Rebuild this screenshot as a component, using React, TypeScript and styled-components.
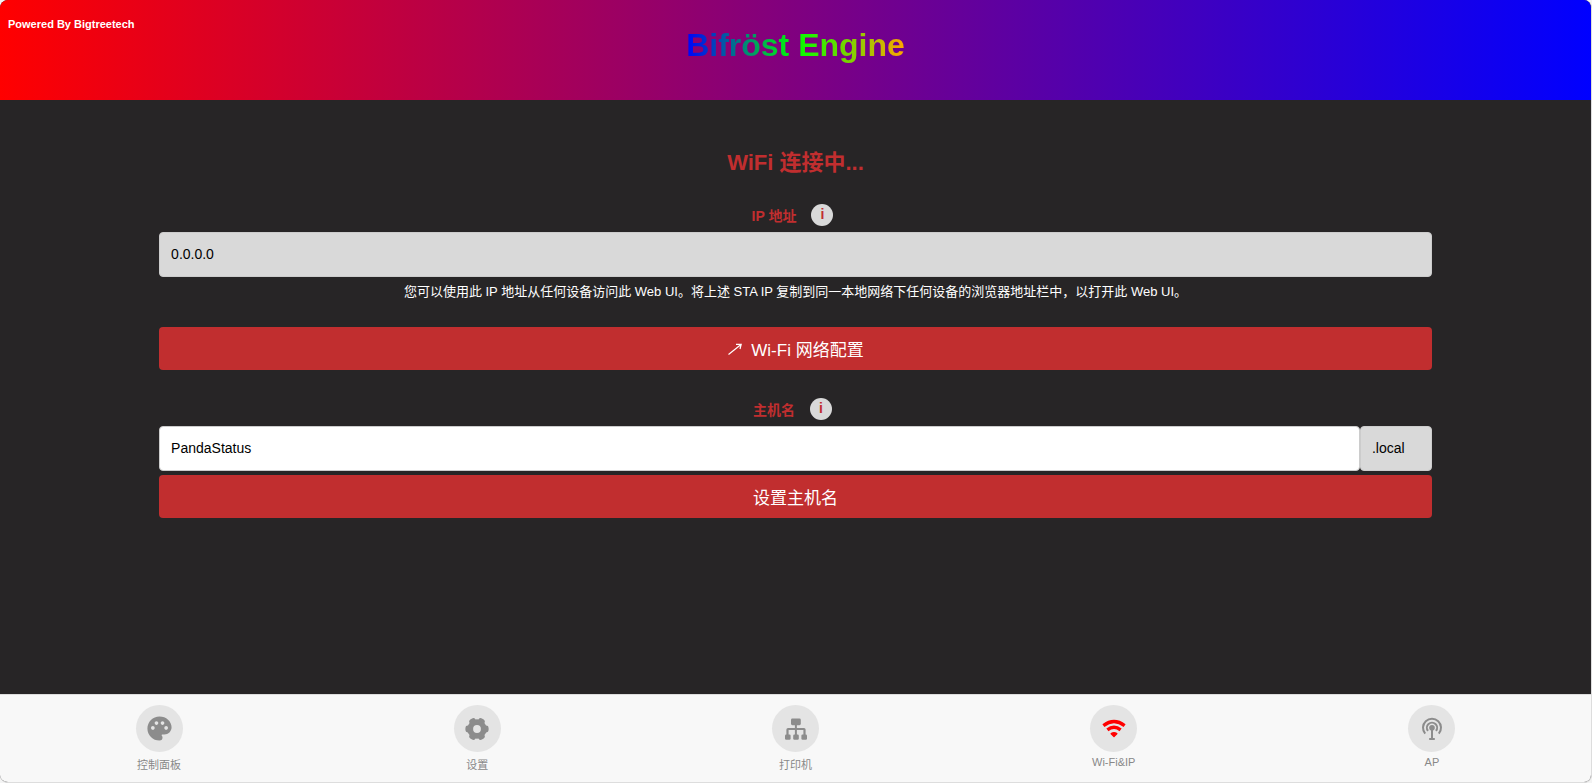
import React, { useState } from "react";
import styled, { createGlobalStyle } from "styled-components";
import { MdPalette } from "react-icons/md";

const GlobalStyle = createGlobalStyle`
  *, *::before, *::after { box-sizing: border-box; }
  body {
    margin: 0;
    background: #f4f4f4;
    font-family: "Liberation Sans", Arial, "Noto Sans CJK SC", sans-serif;
  }
  button, input { font-family: inherit; }
`;

const Shell = styled.div`
  display: flex;
  flex-direction: column;
  min-height: 100vh;
  overflow: hidden;
  border-right: 1px solid #ddd;
  border-bottom: 1px solid #ddd;
  border-radius: 8px;
  background: #272526;
`;

const Header = styled.header`
  display: grid;
  grid-template-columns: 1fr auto 1fr;
  height: 100px;
  padding: 0 8px;
  background: linear-gradient(to right, #f00, #00f);
`;

const PoweredBy = styled.span`
  padding-top: 16px;
  color: #fff;
  font-size: 11px;
  font-weight: bold;
  line-height: 16px;
`;

const Title = styled.h1`
  align-self: start;
  margin: 26px 0 0;
  font-size: 32px;
  line-height: 38px;
  color: transparent;
  background: linear-gradient(to right, #00f, #0f0, orange);
  background-clip: text;
`;

const Main = styled.main`
  flex: 1;
  display: flex;
  flex-direction: column;
  width: 80%;
  margin: 0 auto;
  padding: 47px 0 32px;
`;

const Status = styled.h2`
  margin: 0 0 25px;
  color: #c12e2f;
  font-size: 22px;
  line-height: 32px;
  text-align: center;
`;

const Field = styled.div`
  display: flex;
  flex-direction: column;
`;

const LabelRow = styled.div`
  display: flex;
  justify-content: center;
  align-items: center;
  gap: 15px;
  height: 22px;
  margin-bottom: 6px;
  padding-right: 6px;
`;

const Label = styled.label`
  padding-top: 2px;
  color: #c12e2f;
  font-size: 14px;
  font-weight: bold;
  line-height: 22px;
`;

const InfoButton = styled.button`
  width: 22px;
  height: 22px;
  padding: 0 0 2px;
  border: 0;
  border-radius: 50%;
  background: #d9d9d9;
  color: #c12e2f;
  font-size: 14px;
  font-weight: bold;
  line-height: 20px;
  cursor: pointer;
`;

const InputGroup = styled.div`
  display: flex;
`;

const TextInput = styled.input<{ $muted?: boolean; $suffix?: boolean }>`
  flex: ${(p) => (p.$suffix ? "0 0 72px" : "1 1 0")};
  min-width: 0;
  height: 45px;
  padding: 0 11px 2px;
  border: 1px solid #ccc;
  border-radius: 4px;
  background: ${(p) => (p.$muted ? "#d9d9d9" : "#fff")};
  color: #000;
  font-size: 14px;
`;

const Hint = styled.p`
  margin: 5px 0 26px;
  color: #fff;
  font-size: 13px;
  line-height: 19px;
  text-align: center;
`;

const ActionButton = styled.button`
  display: flex;
  justify-content: center;
  align-items: center;
  gap: 8px;
  width: 100%;
  height: 43px;
  padding: 0;
  border: 0;
  border-radius: 4px;
  background: #c12e2f;
  color: #fff;
  font-size: 17px;
  line-height: normal;
  cursor: pointer;
`;

const HostSection = styled.form`
  display: flex;
  flex-direction: column;
  gap: 4px;
  margin-top: 28px;
`;

const Nav = styled.nav`
  display: flex;
  height: 88px;
  padding-top: 10px;
  border-top: 1px solid #ddd;
  background: #f8f8f8;
`;

const NavItem = styled.a<{ $active?: boolean }>`
  flex: 1;
  display: flex;
  flex-direction: column;
  align-items: center;
  gap: 4px;
  color: #888;
  font-size: 11px;
  line-height: normal;
  text-decoration: none;

  svg { color: ${(p) => (p.$active ? "#f00" : "#8c8c8c")}; }
`;

const IconDisc = styled.span`
  display: grid;
  place-items: center;
  width: 47px;
  height: 47px;
  border-radius: 50%;
  background: #e4e4e4;
`;

const ArrowIcon = () => (
  <svg width="16" height="16" viewBox="0 0 16 16" fill="none" stroke="currentColor" strokeWidth="1.2" aria-hidden="true">
    <path d="M1.5 13.5 14 3.5M9 3.3H14.2L13 8" />
  </svg>
);

const GearIcon = () => (
  <svg width="24" height="24" viewBox="0 0 24 24" aria-hidden="true">
    <circle cx="12" cy="12" r="6.8" fill="none" stroke="currentColor" strokeWidth="5.8" />
    <g fill="currentColor">
      {[0, 60, 120, 180, 240, 300].map((angle) => (
        <rect key={angle} x="17.5" y="8.6" width="6.1" height="6.8" rx="2.4" transform={`rotate(${angle} 12 12)`} />
      ))}
    </g>
  </svg>
);

const PrinterTreeIcon = () => (
  <svg width="24" height="24" viewBox="0 0 24 24" fill="currentColor" aria-hidden="true">
    <rect x="7" y="1.6" width="9.8" height="6.6" rx="1.4" />
    <path d="M10.9 8h2v2.9H20a1.6 1.6 0 0 1 1.6 1.6V18h-2.2v-5h-6.5v5h-2v-5H4.6v5H2.4v-5.5A1.6 1.6 0 0 1 4 10.9h6.9z" />
    <rect x="1" y="17.5" width="5.6" height="5.2" rx="1.2" />
    <rect x="9.2" y="17.5" width="5.6" height="5.2" rx="1.2" />
    <rect x="17.4" y="17.5" width="5.6" height="5.2" rx="1.2" />
  </svg>
);

const WifiIcon = () => (
  <svg width="24" height="24" viewBox="0 0 24 24" fill="none" stroke="currentColor" strokeWidth="3.3" aria-hidden="true">
    <path d="M1.4 8.6Q12 .5 22.6 8.6" />
    <path d="M5.4 12.9Q12 7.5 18.6 12.9" />
    <path d="M9.2 16.7Q12 14.9 14.8 16.7L12 19.4z" fill="currentColor" strokeWidth="1.4" strokeLinejoin="round" />
  </svg>
);

const AntennaIcon = () => (
  <svg width="24" height="24" viewBox="0 0 24 24" fill="none" stroke="currentColor" strokeWidth="2" aria-hidden="true">
    <path d="M5.2 16.6A9 9 0 1 1 18.8 16.6" />
    <path d="M8 13.9A5.1 5.1 0 1 1 16 13.9" />
    <circle cx="12" cy="10.7" r="2.8" fill="currentColor" stroke="none" />
    <path d="M12 12v10M9.2 22h5.6" />
  </svg>
);

const tabs = [
  { id: "panel", label: "控制面板", icon: <MdPalette size={29} /> },
  { id: "settings", label: "设置", icon: <GearIcon /> },
  { id: "printer", label: "打印机", icon: <PrinterTreeIcon /> },
  { id: "wifi", label: "Wi-Fi&IP", icon: <WifiIcon /> },
  { id: "ap", label: "AP", icon: <AntennaIcon /> },
];

export default function App() {
  const [host, setHost] = useState("PandaStatus");
  const [active, setActive] = useState("wifi");

  return (
    <>
      <GlobalStyle />
      <Shell>
        <Header>
          <PoweredBy>Powered By Bigtreetech</PoweredBy>
          <Title>Bifröst Engine</Title>
        </Header>

        <Main>
          <Status>WiFi 连接中...</Status>
          <Field>
            <LabelRow>
              <Label htmlFor="ip">IP 地址</Label>
              <InfoButton type="button">i</InfoButton>
            </LabelRow>
            <InputGroup>
              <TextInput id="ip" value="0.0.0.0" readOnly $muted />
            </InputGroup>
            <Hint>
              您可以使用此 IP 地址从任何设备访问此 Web UI。将上述 STA IP 复制到同一本地网络下任何设备的浏览器地址栏中，以打开此 Web UI。
            </Hint>
          </Field>
          <ActionButton type="button">
            <ArrowIcon />
            Wi-Fi 网络配置
          </ActionButton>

          <HostSection onSubmit={(e) => e.preventDefault()}>
            <Field>
              <LabelRow>
                <Label htmlFor="host">主机名</Label>
                <InfoButton type="button">i</InfoButton>
              </LabelRow>
              <InputGroup>
                <TextInput id="host" value={host} onChange={(e) => setHost(e.target.value)} />
                <TextInput aria-label="域名后缀" value=".local" readOnly $muted $suffix />
              </InputGroup>
            </Field>
            <ActionButton type="submit">设置主机名</ActionButton>
          </HostSection>
        </Main>

        <Nav>
          {tabs.map((tab) => (
            <NavItem
              key={tab.id}
              href={`#${tab.id}`}
              $active={active === tab.id}
              onClick={() => setActive(tab.id)}
            >
              <IconDisc>{tab.icon}</IconDisc>
              {tab.label}
            </NavItem>
          ))}
        </Nav>
      </Shell>
    </>
  );
}
